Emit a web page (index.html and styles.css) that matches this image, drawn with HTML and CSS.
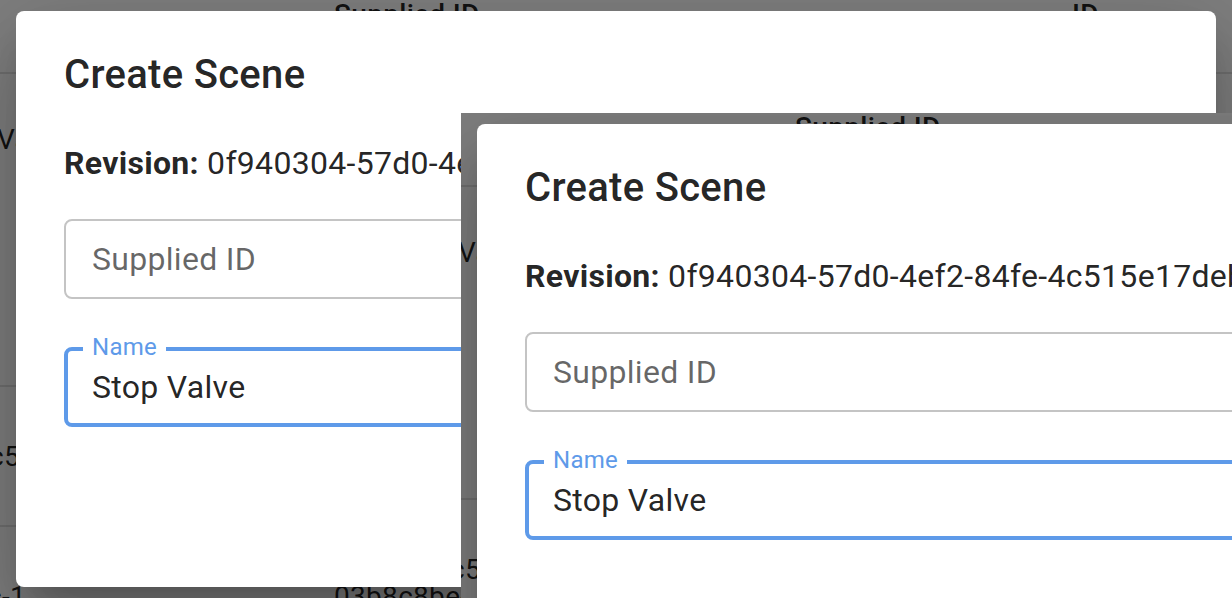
FILE: index.html
```html
<!DOCTYPE html>
<html lang="en">
<head>
<meta charset="utf-8">
<title>Create Scene</title>
<link rel="stylesheet" href="styles.css">
</head>
<body>
<div class="scene">
  <div class="table">
    <div class="row head">
      <div class="cell"></div>
      <div class="cell">Supplied ID</div>
      <div class="cell">ID</div>
    </div>
    <div class="row r1">
      <div class="cell c-first">Valve</div>
      <div class="cell">0f940304-57d0</div>
      <div class="cell">8a1c</div>
    </div>
    <div class="row r2">
      <div class="cell c-first cut">c5</div>
      <div class="cell">7be2c5</div>
      <div class="cell">41fd</div>
    </div>
    <div class="row r3">
      <div class="cell c-first cut2">c-1</div>
      <div class="cell">03b8c8be-</div>
      <div class="cell">9e07</div>
    </div>
  </div>
  <div class="backdrop">
    <div class="dialog">
      <h2 class="dialog-title">Create Scene</h2>
      <div class="dialog-content">
        <p class="revision"><b>Revision:</b> 0f940304-57d0-4ef2-84fe-4c515e17deb3</p>
        <div class="field">
          <span class="placeholder">Supplied ID</span>
        </div>
        <div class="field focused">
          <span class="float-label">Name</span>
          <span class="value">Stop Valve</span>
        </div>
      </div>
    </div>
  </div>
</div>

<div class="inset">
  <div class="scene">
    <div class="table">
      <div class="row head">
        <div class="cell"></div>
        <div class="cell">Supplied ID</div>
        <div class="cell">ID</div>
      </div>
      <div class="row r1">
        <div class="cell c-first">Valve</div>
        <div class="cell">0f940304-57d0</div>
        <div class="cell">8a1c</div>
      </div>
      <div class="row r2">
        <div class="cell c-first cut">c5</div>
        <div class="cell">7be2c5</div>
        <div class="cell">41fd</div>
      </div>
      <div class="row r3">
        <div class="cell c-first cut2">c-1</div>
        <div class="cell">03b8c8be-</div>
        <div class="cell">9e07</div>
      </div>
    </div>
    <div class="backdrop">
      <div class="dialog">
        <h2 class="dialog-title">Create Scene</h2>
        <div class="dialog-content">
          <p class="revision"><b>Revision:</b> 0f940304-57d0-4ef2-84fe-4c515e17deb3</p>
          <div class="field">
            <span class="placeholder">Supplied ID</span>
          </div>
          <div class="field focused">
            <span class="float-label">Name</span>
            <span class="value">Stop Valve</span>
          </div>
        </div>
      </div>
    </div>
  </div>
</div>
</body>
</html>
```
FILE: styles.css
```css
* { box-sizing: border-box; }

html, body {
  margin: 0;
  padding: 0;
}

body {
  position: relative;
  width: 1232px;
  height: 598px;
  overflow: hidden;
  background: #fff;
  font-family: Roboto, "Noto Sans", "Liberation Sans", sans-serif;
  color: rgba(0, 0, 0, 0.87);
}

.scene {
  position: relative;
  width: 1232px;
  height: 598px;
  overflow: hidden;
  background: #fff;
}

/* background table */
.table {
  font-size: 28px;
  letter-spacing: 0.3px;
  color: rgba(0, 0, 0, 0.87);
}

.row {
  display: grid;
  grid-template-columns: 334px 738px 160px;
  border-bottom: 2px solid #e0e0e0;
}

.cell {
  white-space: nowrap;
  overflow: hidden;
}

.head {
  height: 74px;
  font-weight: 500;
  line-height: 30px;
}

.r1 {
  height: 313px;
  padding-top: 46px;
  line-height: 40px;
}

.r2 {
  height: 140px;
  align-items: center;
}

.r3 {
  height: 140px;
  align-items: center;
}

.c-first { text-indent: -3px; }
.cut { text-indent: -11px; }
.cut2 { text-indent: -13px; }

/* modal */
.backdrop {
  position: absolute;
  inset: 0;
  background: rgba(0, 0, 0, 0.5);
  display: flex;
  align-items: center;
  justify-content: center;
}

.dialog {
  width: 1200px;
  height: 576px;
  flex: none;
  background: #fff;
  border-radius: 8px;
  box-shadow:
    0 22px 30px -14px rgba(0, 0, 0, 0.2),
    0 48px 76px 6px rgba(0, 0, 0, 0.14),
    0 18px 92px 16px rgba(0, 0, 0, 0.12);
  overflow: hidden;
  color: rgba(0, 0, 0, 0.87);
}

.dialog-title {
  margin: 0;
  padding: 32px 48px;
  font-size: 40px;
  font-weight: 500;
  line-height: 64px;
  letter-spacing: 0.3px;
}

.dialog-content {
  display: flex;
  flex-direction: column;
  padding: 0 48px 40px;
}

.revision {
  margin: 0;
  font-size: 32px;
  line-height: 48px;
  letter-spacing: 0.3px;
  white-space: nowrap;
}

.revision b { font-weight: 700; }

.field {
  position: relative;
  height: 80px;
  margin: 32px 0 16px;
  padding: 0 26px;
  display: flex;
  align-items: center;
  border: 2px solid #c4c4c4;
  border-radius: 8px;
  font-size: 32px;
  letter-spacing: 0.3px;
}

.placeholder { color: rgba(0, 0, 0, 0.6); }

.field.focused {
  border: 4px solid #5e9ae9;
  padding: 0 24px;
}

.float-label {
  position: absolute;
  left: 15px;
  top: -16px;
  padding: 0 9px;
  background: #fff;
  font-size: 24px;
  line-height: 24px;
  letter-spacing: 0.3px;
  color: #5e9ae9;
}

.value { color: rgba(0, 0, 0, 0.87); }

/* nested screenshot laid over the page */
.inset {
  position: absolute;
  left: 461px;
  top: 113px;
  width: 771px;
  height: 485px;
  overflow: hidden;
}
```
